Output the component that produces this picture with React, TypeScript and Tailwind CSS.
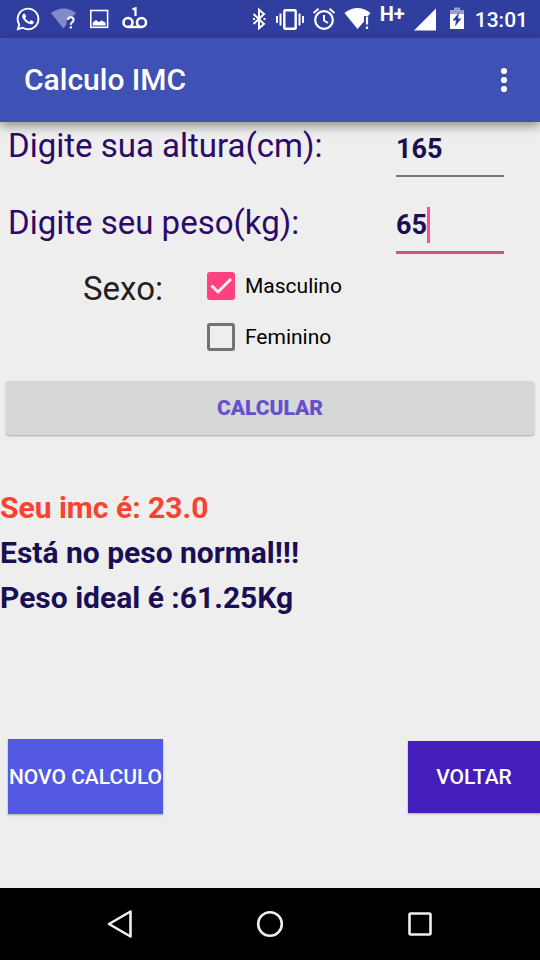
import { useState } from 'react';
import { FaWhatsapp } from 'react-icons/fa';

function StatusBar() {
  return (
    <div className="flex h-[38px] items-center justify-between bg-[#303f9f] pl-[15px] pr-3 text-white">
      <div className="flex items-center gap-2.5">
        <FaWhatsapp className="size-[26px]" />
        <svg className="h-6 w-7" viewBox="0 0 28 24">
          <path d="M0 6 Q13 -3 25 6 L21 10 Q15 10 15.500 17 L12.500 21.500 Z" fill="#fff" fillOpacity="0.4" />
          <path d="M17 13 Q17 10.300 19.800 10.300 Q22.600 10.300 22.600 13 Q22.600 14.300 21 15.400 Q19.800 16.300 19.800 17.800 M19.800 19.300 V21.500" fill="none" stroke="#fff" strokeWidth="2" />
        </svg>
        <svg className="h-6 w-[22px]" viewBox="0 0 22 24">
          <rect x="1.800" y="3.500" width="16.800" height="16.800" fill="none" stroke="#fff" strokeWidth="1.600" />
          <path d="M3.800 18.500 V15.500 L7 13 L9.500 15 L13 13.500 L16.500 15.800 V18.500 Z" fill="#fff" />
        </svg>
        <svg className="h-6 w-7" viewBox="0 0 28 24">
          <path d="M11.500 2.400 L14.500 1.400 V9" fill="none" stroke="#fff" strokeWidth="2.200" />
          <circle cx="7" cy="15.500" r="4.500" fill="none" stroke="#fff" strokeWidth="2.600" />
          <circle cx="20.500" cy="15.500" r="4.500" fill="none" stroke="#fff" strokeWidth="2.600" />
          <path d="M7 20 H20.500" stroke="#fff" strokeWidth="2.400" />
        </svg>
      </div>

      <div className="flex h-full items-center gap-2">
        <svg className="h-6 w-4" viewBox="0 0 16 24">
          <path d="M1.500 7 L12 17 L7 21.300 V2.700 L12 7 L1.500 17" fill="none" stroke="#fff" strokeWidth="2" />
          <path d="M1 12 H3 M11.500 12 H13.500" stroke="#fff" strokeWidth="1.800" />
        </svg>
        <svg className="h-6 w-7" viewBox="0 0 28 24">
          <rect x="8.300" y="3.200" width="11.400" height="18.600" rx="1" fill="none" stroke="#fff" strokeWidth="2.400" />
          <path d="M1 9 V16 M4.500 6.500 V18.500 M23.500 6.500 V18.500 M27 9 V16" stroke="#fff" strokeWidth="2" />
        </svg>
        <svg className="size-6" viewBox="0 0 24 24">
          <circle cx="12" cy="13" r="8.800" fill="none" stroke="#fff" strokeWidth="2.200" />
          <path d="M12 8 V13.500 L16 16 M1.500 6 L6.500 1.800 M22.500 6 L17.500 1.800" fill="none" stroke="#fff" strokeWidth="2" />
        </svg>
        <svg className="h-6 w-7" viewBox="0 0 28 24">
          <path d="M0.500 6 Q13.500 -4 26.500 6 L24 9 H20 V14.500 L13.500 22 Z" fill="#fff" />
          <path d="M23 9.500 V17.500 M23 19.500 V22" stroke="#fff" strokeWidth="2.200" />
        </svg>
        <span className="self-start pt-1 text-xl leading-5 font-bold">H+</span>
        <svg className="size-6" viewBox="0 0 24 24">
          <path d="M23 1.500 V23.500 H1 Z" fill="#fff" />
        </svg>
        <svg className="ml-1 mr-0.5 h-6 w-4" viewBox="0 0 16 24">
          <path d="M5 0.500 H11 V3 H15 V8 H1 V3 H5 Z" fill="#fff" fillOpacity="0.5" />
          <path d="M1 7 H15 V22 H1 Z" fill="#fff" />
          <path d="M10 5.500 L3.500 13.500 H7 L6 19.500 L12.500 11.500 H9 Z" fill="#303f9f" />
        </svg>
        <span className="pt-0.5 text-[21px] leading-6 font-medium">13:01</span>
      </div>
    </div>
  );
}

function AppBar() {
  return (
    <header className="relative flex h-[84px] items-center justify-between bg-[#3f51b5] pl-6 pr-3 text-white shadow-[0_4px_10px_rgba(0,0,0,0.4)]">
      <h1 className="text-3xl font-medium">Calculo IMC</h1>
      <button type="button" aria-label="Menu" className="flex size-12 items-center justify-center">
        <svg className="size-8" viewBox="0 0 32 32" fill="currentColor">
          <circle cx="16" cy="7" r="3.100" />
          <circle cx="16" cy="16" r="3.100" />
          <circle cx="16" cy="25" r="3.100" />
        </svg>
      </button>
    </header>
  );
}

type SexOptionProps = {
  label: string;
  checked: boolean;
  onChange: () => void;
};

function SexOption({ label, checked, onChange }: SexOptionProps) {
  return (
    <label className="flex items-center gap-2.5 text-[21px] leading-7 text-black">
      <span className="grid size-7">
        <input
          type="checkbox"
          checked={checked}
          onChange={onChange}
          className="col-start-1 row-start-1 size-7 appearance-none rounded-[3px] border-3 border-[#737373] checked:border-[#ff4081] checked:bg-[#ff4081]"
        />
        {checked && (
          <svg className="pointer-events-none col-start-1 row-start-1 size-7" viewBox="0 0 28 28">
            <path d="M4.500 13.500 L11 20 L24 7" fill="none" stroke="#f5eef0" strokeWidth="3" />
          </svg>
        )}
      </span>
      {label}
    </label>
  );
}

function NavBar() {
  return (
    <nav className="flex h-[72px] items-center justify-center gap-[114px] bg-black text-[#eeeeee]">
      <button type="button" aria-label="Voltar para a tela anterior">
        <svg className="size-9" viewBox="0 0 36 36" fill="none" stroke="currentColor" strokeWidth="2.600" strokeLinejoin="round">
          <path d="M28.500 5.500 V30.500 L7 18 Z" />
        </svg>
      </button>
      <button type="button" aria-label="Início">
        <svg className="size-9" viewBox="0 0 36 36" fill="none" stroke="currentColor" strokeWidth="2.600">
          <circle cx="18" cy="18" r="11.800" />
        </svg>
      </button>
      <button type="button" aria-label="Aplicativos recentes">
        <svg className="size-9" viewBox="0 0 36 36" fill="none" stroke="currentColor" strokeWidth="2.600">
          <rect x="7.500" y="7.500" width="21" height="21" rx="1" />
        </svg>
      </button>
    </nav>
  );
}

export default function App() {
  const [altura, setAltura] = useState('165');
  const [peso, setPeso] = useState('65');
  const [sexo, setSexo] = useState('M');
  const [resultado, setResultado] = useState({ imc: '23.0', texto: 'Está no peso normal!!!', ideal: '61.25' });

  const calcular = () => {
    const h = Number(altura);
    const imc = Number(peso) / (h / 100) ** 2;
    if (!isFinite(imc) || imc <= 0) return;

    let texto = 'Está no peso normal!!!';
    if (imc < 18.5) texto = 'Está abaixo do peso!!!';
    if (imc >= 25) texto = 'Está acima do peso!!!';
    const ideal = h - 100 - (h - 150) / (sexo === 'M' ? 4 : 2);
    setResultado({ imc: Math.floor(imc).toFixed(1), texto, ideal: String(ideal) });
  };

  const limpar = () => {
    setAltura('');
    setPeso('');
  };

  return (
    <div className="flex min-h-screen flex-col bg-[#eeeeee] font-[Roboto,sans-serif]">
      <StatusBar />
      <AppBar />

      <main className="flex flex-1 flex-col">
        <div className="flex items-start justify-between pl-2 pr-9 text-[33px] leading-[38px] text-[#2b0b69]">
          <label htmlFor="altura" className="pt-[5px]">Digite sua altura(cm):</label>
          <div className="flex h-[55px] w-[108px] items-center border-b-2 border-[#757575] text-[27px] font-bold text-[#1b0e52]">
            <input
              id="altura"
              inputMode="numeric"
              value={altura}
              onChange={(e) => setAltura(e.target.value)}
              className="w-full bg-transparent outline-none"
            />
          </div>
        </div>

        <div className="mt-[22px] flex items-start justify-between pl-2 pr-9 text-[33px] leading-[38px] text-[#2b0b69]">
          <label htmlFor="peso" className="pt-[5px]">Digite seu peso(kg):</label>
          <div className="flex h-[55px] w-[108px] items-center border-b-3 border-[#d8507c] text-[27px] font-bold text-[#1b0e52]">
            <input
              id="peso"
              inputMode="numeric"
              value={peso}
              onChange={(e) => setPeso(e.target.value)}
              className="field-sizing-content bg-transparent outline-none"
            />
            <span className="h-9 w-[3px] bg-[#ff4f8a]" />
          </div>
        </div>

        <fieldset className="mt-4 flex items-start gap-11 pl-[83px]">
          <span className="text-[33px] leading-[38px] text-[#212121]">Sexo:</span>
          <div className="flex flex-col gap-[23px] pt-0.5">
            <SexOption label="Masculino" checked={sexo === 'M'} onChange={() => setSexo('M')} />
            <SexOption label="Feminino" checked={sexo === 'F'} onChange={() => setSexo('F')} />
          </div>
        </fieldset>

        <button
          type="button"
          onClick={calcular}
          className="mx-1.5 mt-[30px] h-[54px] rounded-[3px] bg-[#d6d7d7] pt-0.5 text-[21px] font-black text-[#6750ce] shadow-[0_1px_2px_rgba(0,0,0,0.3)]"
        >
          CALCULAR
        </button>

        <div className="mt-[50px] text-3xl leading-[45px] font-bold text-[#1b0e52]">
          <p className="text-[#f9422f]">Seu imc é: {resultado.imc}</p>
          <p>{resultado.texto}</p>
          <p>Peso ideal é :{resultado.ideal}Kg</p>
        </div>

        <div className="mt-auto mb-[74px] flex items-center justify-between pl-2 text-[21px] font-medium text-white">
          <button
            type="button"
            onClick={limpar}
            className="h-[75px] w-[155px] bg-[#5459e4] pt-0.5 whitespace-nowrap shadow-[0_1px_2px_rgba(0,0,0,0.3)]"
          >
            NOVO CALCULO
          </button>
          <button type="button" className="h-[72px] w-[132px] bg-[#431eba] pt-0.5 shadow-[0_1px_2px_rgba(0,0,0,0.3)]">
            VOLTAR
          </button>
        </div>
      </main>

      <NavBar />
    </div>
  );
}
